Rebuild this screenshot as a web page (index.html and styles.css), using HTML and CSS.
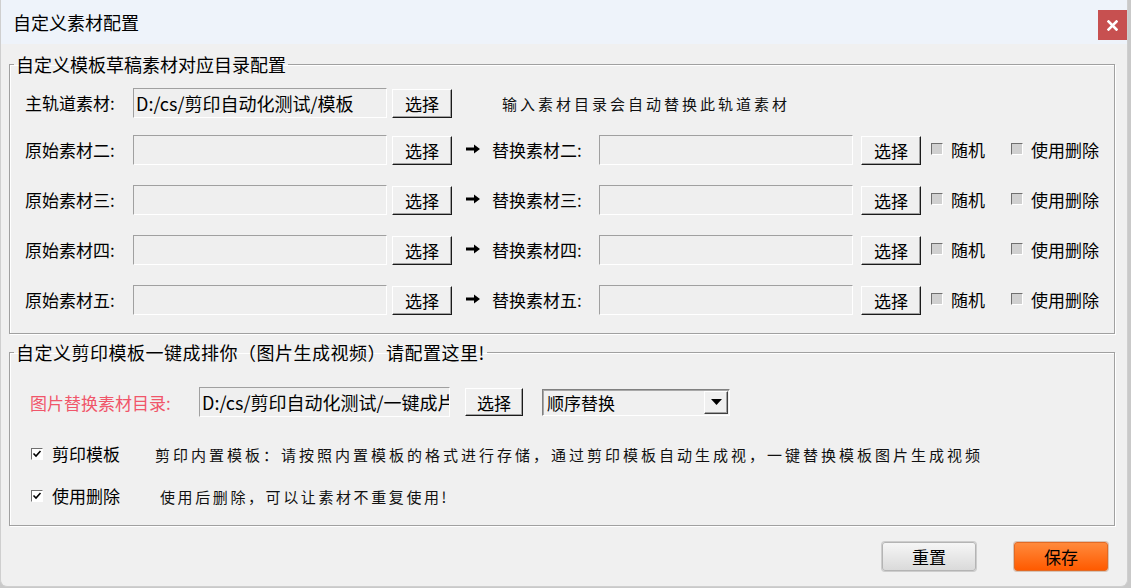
FILE: index.html
```html
<!DOCTYPE html>
<html lang="zh-CN">
<head>
<meta charset="utf-8">
<title>自定义素材配置</title>
<link rel="stylesheet" href="styles.css">
</head>
<body>
<div class="window">
  <div class="titlebar">
    <span class="title">自定义素材配置</span>
    <button class="close" aria-label="关闭"><svg width="11" height="11" viewBox="0 0 11 11"><path d="M1.5 1.5 L9.5 9.5 M9.5 1.5 L1.5 9.5" stroke="#fff" stroke-width="2.6" stroke-linecap="square"/></svg></button>
  </div>
  <div class="content">
    <fieldset class="group">
      <legend>自定义模板草稿素材对应目录配置</legend>
      <div class="gbody g1">
        <div class="row first">
          <span class="label">主轨道素材:</span>
          <div class="field">D:/cs/剪印自动化测试/模板</div>
          <button class="btn">选择</button>
          <span class="hint">输入素材目录会自动替换此轨道素材</span>
        </div>
        <div class="row">
          <span class="label">原始素材二:</span>
          <div class="field"></div>
          <button class="btn">选择</button>
          <svg class="arrow" width="14" height="12" viewBox="0 0 14 12"><path d="M0 4.5 H8 V1.5 L14 6 L8 10.5 V7.5 H0 Z" fill="#000"/></svg>
          <span class="label2">替换素材二:</span>
          <div class="field"></div>
          <button class="btn btn-r">选择</button>
          <span class="cb"></span><span class="cbt">随机</span>
          <span class="cb cb2"></span><span class="cbt">使用删除</span>
        </div>
        <div class="row">
          <span class="label">原始素材三:</span>
          <div class="field"></div>
          <button class="btn">选择</button>
          <svg class="arrow" width="14" height="12" viewBox="0 0 14 12"><path d="M0 4.5 H8 V1.5 L14 6 L8 10.5 V7.5 H0 Z" fill="#000"/></svg>
          <span class="label2">替换素材三:</span>
          <div class="field"></div>
          <button class="btn btn-r">选择</button>
          <span class="cb"></span><span class="cbt">随机</span>
          <span class="cb cb2"></span><span class="cbt">使用删除</span>
        </div>
        <div class="row">
          <span class="label">原始素材四:</span>
          <div class="field"></div>
          <button class="btn">选择</button>
          <svg class="arrow" width="14" height="12" viewBox="0 0 14 12"><path d="M0 4.5 H8 V1.5 L14 6 L8 10.5 V7.5 H0 Z" fill="#000"/></svg>
          <span class="label2">替换素材四:</span>
          <div class="field"></div>
          <button class="btn btn-r">选择</button>
          <span class="cb"></span><span class="cbt">随机</span>
          <span class="cb cb2"></span><span class="cbt">使用删除</span>
        </div>
        <div class="row">
          <span class="label">原始素材五:</span>
          <div class="field"></div>
          <button class="btn">选择</button>
          <svg class="arrow" width="14" height="12" viewBox="0 0 14 12"><path d="M0 4.5 H8 V1.5 L14 6 L8 10.5 V7.5 H0 Z" fill="#000"/></svg>
          <span class="label2">替换素材五:</span>
          <div class="field"></div>
          <button class="btn btn-r">选择</button>
          <span class="cb"></span><span class="cbt">随机</span>
          <span class="cb cb2"></span><span class="cbt">使用删除</span>
        </div>
      </div>
    </fieldset>

    <fieldset class="group group2">
      <legend>自定义剪印模板一键成排你（图片生成视频）请配置这里!</legend>
      <div class="gbody g2">
        <div class="row first2">
          <span class="label-red">图片替换素材目录:</span>
          <div class="field field2">D:/cs/剪印自动化测试/一键成片</div>
          <button class="btn btn2">选择</button>
          <div class="combo">
            <span class="combo-text">顺序替换</span>
            <span class="combo-btn"><svg width="11" height="6" viewBox="0 0 11 6"><path d="M0 0 H11 L5.5 6 Z" fill="#000"/></svg></span>
          </div>
        </div>
        <div class="row crow">
          <span class="cb checked"><svg width="10" height="10" viewBox="0 0 10 10"><path d="M1.5 4.5 L4 7 L8.5 2" stroke="#000" stroke-width="1.6" fill="none"/></svg></span>
          <span class="ctext">剪印模板</span>
          <span class="hint hint2">剪印内置模板：请按照内置模板的格式进行存储，通过剪印模板自动生成视，一键替换模板图片生成视频</span>
        </div>
        <div class="row crow crow2">
          <span class="cb checked"><svg width="10" height="10" viewBox="0 0 10 10"><path d="M1.5 4.5 L4 7 L8.5 2" stroke="#000" stroke-width="1.6" fill="none"/></svg></span>
          <span class="ctext">使用删除</span>
          <span class="hint hint3">使用后删除，可以让素材不重复使用!</span>
        </div>
      </div>
    </fieldset>

    <div class="actions">
      <button class="act reset">重置</button>
      <button class="act save">保存</button>
    </div>
  </div>
</div>
</body>
</html>
```

FILE: styles.css
```css
* { box-sizing: border-box; }

html, body {
  margin: 0;
  padding: 0;
  width: 1131px;
  height: 588px;
  overflow: hidden;
  background: #c9c9c9;
  font-family: "Noto Sans CJK SC", "Microsoft YaHei", sans-serif;
  color: #000;
}

.window {
  width: 1128px;
  height: 587px;
  background: #f0f0f0;
  border: 1px solid #cfcfcf;
  border-top: 0;
  border-radius: 0 0 7px 7px;
  overflow: hidden;
}

.titlebar {
  height: 44px;
  background: #eef3fa;
  display: flex;
  justify-content: space-between;
  align-items: flex-start;
}

.title {
  font-size: 18px;
  line-height: 44px;
  padding-left: 12px;
}

.close {
  margin-top: 10px;
  width: 29px;
  height: 30px;
  border: 0;
  padding: 0;
  background: #c75050;
  display: flex;
  align-items: center;
  justify-content: center;
}

.content {
  padding: 0 12px 0 8px;
}

.group {
  margin: 8px 0 0;
  padding: 0;
  min-width: 0;
  border: 1px solid #a0a0a0;
  box-shadow: 1px 1px 0 #fff, inset 1px 1px 0 #fff;
}

.group legend {
  margin-left: 4px;
  padding: 0 2px;
  font-size: 18px;
  line-height: 24px;
}

.group2 {
  margin-top: 6px;
}

.group2 legend {
  letter-spacing: 0.5px;
}

.gbody.g1 {
  padding: 12px 0 18px 15px;
}

.gbody.g2 {
  padding: 23px 0 14px 20px;
}

.row {
  display: flex;
  align-items: center;
  height: 30px;
  margin-top: 20px;
}

.row.first {
  margin-top: 0;
  margin-bottom: -3px;
}

.row.first2 {
  margin-top: 0;
}

.label {
  width: 108px;
  font-size: 17px;
  line-height: 30px;
  white-space: nowrap;
}

.label2 {
  width: 107px;
  margin-left: 12px;
  font-size: 17px;
  line-height: 30px;
  white-space: nowrap;
}

.field {
  width: 254px;
  height: 30px;
  border: 1px solid;
  border-color: #a0a0a0 #fff #fff #a0a0a0;
  background: #efefef;
  font-size: 18px;
  line-height: 28px;
  padding: 0 2px;
  white-space: nowrap;
  overflow: hidden;
}

.btn {
  margin-left: 5px;
  width: 60px;
  height: 29px;
  padding: 0;
  background: #f0f0f0;
  border: 1px solid;
  border-color: #fff #1a1a1a #1a1a1a #fff;
  box-shadow: inset -1px -1px 0 #a0a0a0;
  font-family: inherit;
  font-size: 17px;
  line-height: 27px;
  color: #000;
}

.btn-r {
  margin-left: 8px;
}

.arrow {
  margin-left: 14px;
  margin-top: -3px;
  flex: none;
}

.cb {
  flex: none;
  width: 12px;
  height: 12px;
  margin-left: 10px;
  margin-top: -3px;
  border: 1px solid;
  border-color: #6f6f6f #fff #fff #6f6f6f;
  background: #d0d0d0;
  display: flex;
  align-items: center;
  justify-content: center;
}

.cb2 {
  margin-left: 26px;
}

.cbt {
  margin-left: 8px;
  font-size: 17px;
  line-height: 30px;
  white-space: nowrap;
}

.hint {
  margin-left: 50px;
  font-size: 15px;
  letter-spacing: 3px;
  color: #111;
  white-space: nowrap;
}

.label-red {
  width: 169px;
  font-size: 17px;
  color: #f0566a;
  white-space: nowrap;
}

.field2 {
  width: 251px;
}

.btn2 {
  margin-left: 15px;
  width: 58px;
  height: 28px;
}

.combo {
  margin-left: 19px;
  width: 188px;
  height: 27px;
  border: 1px solid;
  border-color: #808080 #fff #fff #808080;
  box-shadow: inset 1px 1px 0 #a8a8a8;
  background: #f0f0f0;
  display: flex;
  align-items: center;
  justify-content: space-between;
  padding: 1px 1px 1px 4px;
}

.combo-text {
  font-size: 17px;
  line-height: 25px;
}

.combo-btn {
  width: 24px;
  height: 23px;
  border: 1px solid;
  border-color: #fff #404040 #404040 #fff;
  box-shadow: inset -1px -1px 0 #a0a0a0;
  background: #f0f0f0;
  display: flex;
  align-items: center;
  justify-content: center;
}

.crow {
  margin-top: 22px;
}

.crow2 {
  margin-top: 12px;
}

.cb.checked {
  margin-left: 1px;
  margin-top: 0;
  background: #fff;
}

.ctext {
  width: 103px;
  margin-left: 9px;
  font-size: 17px;
  line-height: 30px;
  white-space: nowrap;
}

.hint2 {
  margin-left: 0;
  letter-spacing: 3px;
}

.hint3 {
  margin-left: 5px;
  letter-spacing: 2.6px;
}

.actions {
  display: flex;
  justify-content: flex-end;
  gap: 38px;
  margin-top: 16px;
  padding-right: 7px;
}

.act {
  width: 94px;
  height: 29px;
  padding: 0;
  border-radius: 3px;
  font-family: inherit;
  font-size: 17px;
  line-height: 27px;
  color: #000;
}

.reset {
  border: 1px solid #b4b4b4;
  background: linear-gradient(#f6f6f6, #dadada);
  box-shadow: 0 0 0 1px #cdcdcd;
}

.save {
  border: 1px solid #e36a24;
  background: linear-gradient(#ff8a3c, #ff5a00);
  box-shadow: 0 0 0 1px #d6c3b6;
}
```
